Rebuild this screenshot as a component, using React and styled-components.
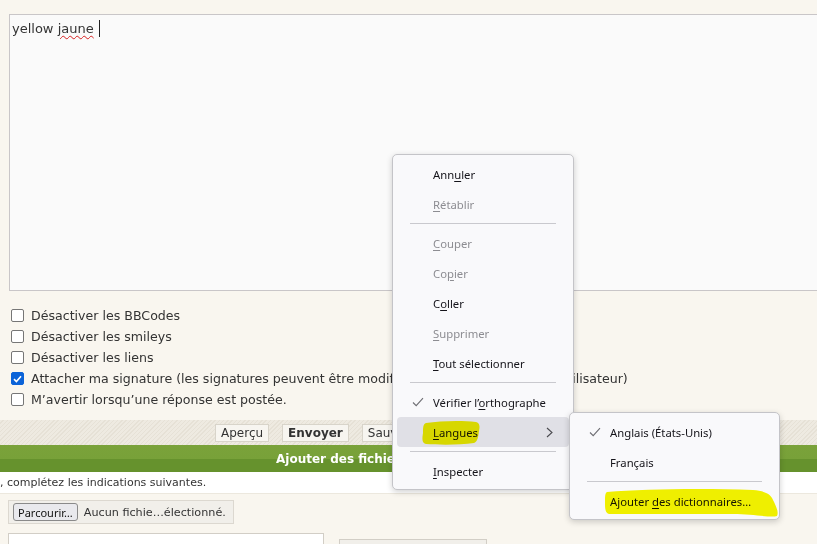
import React from 'react'
import styled, { createGlobalStyle } from 'styled-components'

const GlobalStyle = createGlobalStyle`
  html, body {
    margin: 0;
    padding: 0;
    background: #f9f6ef;
    overflow: hidden;
  }
  #root {
    width: 817px;
    height: 544px;
    position: relative;
    overflow: hidden;
  }
`

const Page = styled.div`
  display: flex;
  flex-direction: column;
  font-family: "DejaVu Sans", Verdana, sans-serif;
  color: #333;
`

const EditorWrap = styled.div`
  padding: 14px 0 0 9px;
  margin-right: -20px;
`

const Editor = styled.div`
  height: 277px;
  border: 1px solid #c9c6c8;
  background: #fafafa;
  padding: 5px 2px;
  box-sizing: border-box;
  font-size: 13px;
  color: #333;
`

const Misspelled = styled.span`
  text-decoration: underline wavy #d62020;
  text-decoration-thickness: 1px;
  text-underline-offset: 2px;
`

const Caret = styled.span`
  display: inline-block;
  width: 1px;
  height: 17px;
  background: #222;
  vertical-align: -4px;
  margin-left: 5px;
`

const Options = styled.div`
  display: flex;
  flex-direction: column;
  padding: 14px 0 10px 11px;
`

const OptionRow = styled.label`
  display: flex;
  align-items: center;
  gap: 7px;
  height: 21px;
  font-size: 12.6px;
  color: #333;
  white-space: nowrap;
`

const Box = styled.span`
  width: 11px;
  height: 11px;
  border: 1px solid #767676;
  border-radius: 2px;
  background: ${p => (p.$checked ? '#0b63d8' : '#fff')};
  border-color: ${p => (p.$checked ? '#0b63d8' : '#767676')};
  display: flex;
  align-items: center;
  justify-content: center;
  flex-shrink: 0;
`

const ButtonBar = styled.div`
  height: 25px;
  display: flex;
  align-items: center;
  gap: 13px;
  padding-left: 215px;
  background: repeating-linear-gradient(
    135deg,
    #eeeae1 0px,
    #eeeae1 2px,
    #e6e1d6 2px,
    #e6e1d6 3px
  );
`

const Btn = styled.span`
  display: inline-flex;
  align-items: center;
  height: 16px;
  padding: 0 5px;
  border: 1px solid #d8d4ca;
  background: #f7f5f0;
  font-size: 12px;
  color: #333;
  font-weight: ${p => (p.$bold ? 'bold' : 'normal')};
`

const GreenBar = styled.div`
  height: 27px;
  background: linear-gradient(#7aa23a 0, #78a139 14px, #66922d 14px, #66922d 100%);
  color: #fff;
  font-weight: bold;
  font-size: 12px;
  display: flex;
  align-items: center;
  padding-left: 276px;
  white-space: nowrap;
`

const InfoRow = styled.div`
  height: 21px;
  background: #fff;
  font-size: 11px;
  color: #333;
  display: flex;
  align-items: center;
  border-bottom: 1px solid #ece8de;
`

const FileRow = styled.div`
  padding: 6px 0 0 8px;
  display: flex;
`

const FileBox = styled.div`
  display: flex;
  align-items: center;
  gap: 6px;
  height: 22px;
  padding: 0 7px 0 4px;
  border: 1px solid #dcd8d0;
  background: #f1efea;
  font-size: 11.2px;
  color: #333;
`

const FileBtn = styled.span`
  display: inline-flex;
  align-items: center;
  height: 16px;
  padding: 0 4px;
  border: 1px solid #8a8a8a;
  border-radius: 3px;
  background: #e9e9ed;
  font-size: 11px;
  font-family: "Noto Sans", sans-serif;
  color: #111;
`

const BottomRow = styled.div`
  display: flex;
  gap: 15px;
  padding: 9px 0 0 8px;
`

const WhiteBox = styled.div`
  width: 314px;
  height: 30px;
  border: 1px solid #d2cec6;
  background: #fff;
`

const AddBtn = styled.div`
  margin-top: 6px;
  width: 148px;
  height: 20px;
  border: 1px solid #d2cec6;
  background: #f1efea;
  font-size: 12px;
  text-align: center;
  padding-top: 3px;
  box-sizing: border-box;
`

const Menu = styled.div`
  position: absolute;
  left: ${p => p.$x}px;
  top: ${p => p.$y}px;
  width: ${p => p.$w}px;
  box-sizing: border-box;
  background: #f9f9fb;
  border: 1px solid #c4c4c8;
  border-radius: 5px;
  box-shadow: 0 2px 6px rgba(0, 0, 0, 0.18);
  padding: 4px 4px 3px 4px;
  font-family: "Noto Sans", "Open Sans", sans-serif;
  font-size: 11.3px;
`

const Item = styled.div`
  position: relative;
  height: 30px;
  display: flex;
  align-items: center;
  padding-left: 36px;
  border-radius: 4px;
  color: ${p => (p.$disabled ? '#8d8d92' : '#15141a')};
  background: ${p => (p.$active ? '#e0e0e6' : 'transparent')};
  white-space: pre;
`

const U = styled.span`
  text-decoration: underline;
  text-underline-offset: 2px;
`

const Sep = styled.div`
  height: 1px;
  margin: 4px 13px 4px 13px;
  background: #c9c9ce;
`

const CheckIcon = styled.svg`
  position: absolute;
  left: 15px;
  top: 10px;
`

const Chevron = styled.svg`
  position: absolute;
  right: 16px;
  top: 10px;
`

const Highlight = styled.svg`
  position: absolute;
  left: ${p => p.$x}px;
  top: ${p => p.$y}px;
  mix-blend-mode: multiply;
  pointer-events: none;
`

const Check = () => (
  <CheckIcon width="12" height="10" viewBox="0 0 12 10">
    <path d="M1 5.5 L4.2 8.6 L11 1.2" fill="none" stroke="#6e6e73" strokeWidth="1.1" />
  </CheckIcon>
)

const options = [
  { label: 'Désactiver les BBCodes' },
  { label: 'Désactiver les smileys' },
  { label: 'Désactiver les liens' },
  {
    label:
      'Attacher ma signature (les signatures peuvent être modifiées dans le panneau de l’utilisateur)',
    checked: true
  },
  { label: 'M’avertir lorsqu’une réponse est postée.' }
]

const App = () => (
  <>
    <GlobalStyle />
    <Page>
      <EditorWrap>
        <Editor>
          yellow <Misspelled>jaune</Misspelled>
          <Caret />
        </Editor>
      </EditorWrap>
      <Options>
        {options.map(o => (
          <OptionRow key={o.label}>
            <Box $checked={o.checked}>
              {o.checked && (
                <svg width="9" height="8" viewBox="0 0 9 8">
                  <path d="M1 4.2 L3.4 6.5 L8 1.3" fill="none" stroke="#fff" strokeWidth="1.6" />
                </svg>
              )}
            </Box>
            {o.label}
          </OptionRow>
        ))}
      </Options>
      <ButtonBar>
        <Btn>Aperçu</Btn>
        <Btn $bold>Envoyer</Btn>
        <Btn>Sauvegarder</Btn>
      </ButtonBar>
      <GreenBar>Ajouter des fichiers joints</GreenBar>
      <InfoRow>, complétez les indications suivantes.</InfoRow>
      <FileRow>
        <FileBox>
          <FileBtn>Parcourir…</FileBtn>
          <span>Aucun fichie…électionné.</span>
        </FileBox>
      </FileRow>
      <BottomRow>
        <WhiteBox />
        <AddBtn>Ajouter le fichier</AddBtn>
      </BottomRow>
    </Page>

    <Menu $x={392} $y={154} $w={182}>
      <Item><span>Ann<U>u</U>ler</span></Item>
      <Item $disabled><span><U>R</U>établir</span></Item>
      <Sep />
      <Item $disabled><span><U>C</U>ouper</span></Item>
      <Item $disabled><span>Co<U>p</U>ier</span></Item>
      <Item><span>C<U>o</U>ller</span></Item>
      <Item $disabled><span><U>S</U>upprimer</span></Item>
      <Item><span><U>T</U>out sélectionner</span></Item>
      <Sep />
      <Item>
        <Check />
        <span>Vérifier l’<U>o</U>rthographe</span>
      </Item>
      <Item $active>
        <span><U>L</U>angues</span>
        <Chevron width="7" height="11" viewBox="0 0 7 11">
          <path d="M1 1 L6 5.5 L1 10" fill="none" stroke="#4a4a4f" strokeWidth="1.1" />
        </Chevron>
      </Item>
      <Sep />
      <Item><span><U>I</U>nspecter</span></Item>
    </Menu>

    <Menu $x={569} $y={412} $w={211}>
      <Item>
        <Check />
        <span>Anglais (États-Unis)</span>
      </Item>
      <Item><span>Français</span></Item>
      <Sep />
      <Item><span>Ajouter <U>d</U>es dictionnaires…</span></Item>
    </Menu>

    <Highlight $x={420} $y={419} width="62" height="28" viewBox="0 0 62 28">
      <path
        d="M6 4 C20 2 40 1 56 3 C60 4 60 8 59 12 C58 18 58 22 54 24 C40 26 20 26 6 25 C2 24 2 20 3 14 C3 9 3 5 6 4 Z"
        fill="#f5f500"
      />
    </Highlight>
    <Highlight $x={603} $y={486} width="180" height="34" viewBox="0 0 180 34">
      <path
        d="M4 6 C40 3 100 2 150 4 C162 5 168 8 170 14 C173 20 176 26 174 30 C168 32 150 28 130 28 C90 28 40 28 6 28 C2 27 2 22 2 16 C2 11 2 7 4 6 Z"
        fill="#f5f500"
      />
    </Highlight>
  </>
)

export default App
